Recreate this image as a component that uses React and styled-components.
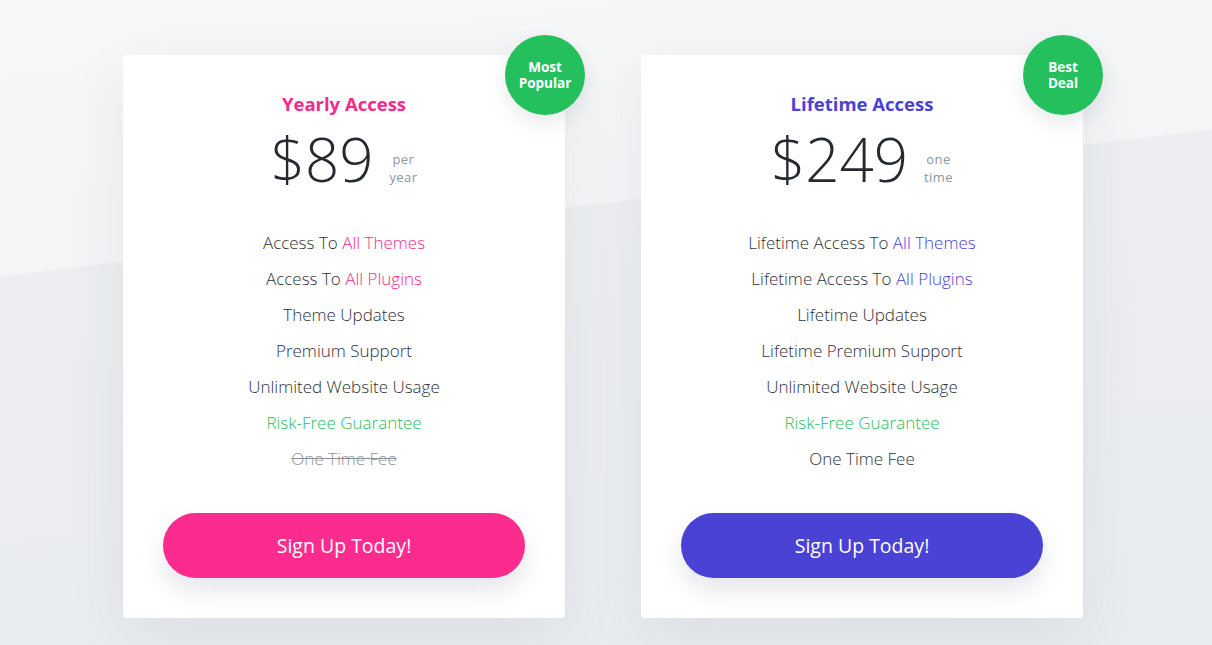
import React from 'react';
import styled, { createGlobalStyle } from 'styled-components';

const GlobalStyle = createGlobalStyle`
  html, body {
    margin: 0;
    padding: 0;
  }
  body {
    font-family: "Open Sans", "Liberation Sans", sans-serif;
    background: #f5f6f8;
  }
`;

const plans = [
  {
    title: 'Yearly Access',
    accent: '#f72a8c',
    button: '#fb2c8e',
    price: '$89',
    unit: ['per', 'year'],
    badge: ['Most', 'Popular'],
    features: [
      { text: 'Access To ', hi: 'All Themes' },
      { text: 'Access To ', hi: 'All Plugins' },
      { text: 'Theme Updates' },
      { text: 'Premium Support' },
      { text: 'Unlimited Website Usage' },
      { text: 'Risk-Free Guarantee', tone: 'green' },
      { text: 'One Time Fee', tone: 'struck' },
    ],
  },
  {
    title: 'Lifetime Access',
    accent: '#4a42d6',
    button: '#4a42d4',
    price: '$249',
    unit: ['one', 'time'],
    badge: ['Best', 'Deal'],
    features: [
      { text: 'Lifetime Access To ', hi: 'All Themes' },
      { text: 'Lifetime Access To ', hi: 'All Plugins' },
      { text: 'Lifetime Updates' },
      { text: 'Lifetime Premium Support' },
      { text: 'Unlimited Website Usage' },
      { text: 'Risk-Free Guarantee', tone: 'green' },
      { text: 'One Time Fee' },
    ],
  },
];

const App = () => (
  <>
    <GlobalStyle />
    <Page>
      <Cards>
        {plans.map((plan) => (
          <Card key={plan.title}>
            <Badge>
              {plan.badge[0]}
              <br />
              {plan.badge[1]}
            </Badge>
            <Title $accent={plan.accent}>{plan.title}</Title>
            <PriceRow>
              <Price>{plan.price}</Price>
              <Unit>
                <UnitLine>{plan.unit[0]}</UnitLine>
                <UnitLine>{plan.unit[1]}</UnitLine>
              </Unit>
            </PriceRow>
            <Features>
              {plan.features.map((f) => (
                <Feature key={f.text + (f.hi || '')} $tone={f.tone}>
                  {f.text}
                  {f.hi && <Highlight $accent={plan.accent}>{f.hi}</Highlight>}
                </Feature>
              ))}
            </Features>
            <SignUp $color={plan.button}>Sign Up Today!</SignUp>
          </Card>
        ))}
      </Cards>
    </Page>
  </>
);

export default App;

const Page = styled.div`
  min-height: 645px;
  box-sizing: border-box;
  padding: 55px 6px 27px 0;
  background: linear-gradient(173.08deg, #f6f7f8 0px, #f4f5f7 274px, #eceef1 275px, #e9ecef 100%);
`;

const Cards = styled.div`
  display: flex;
  justify-content: center;
  gap: 76px;
`;

const Card = styled.div`
  position: relative;
  width: 442px;
  box-sizing: border-box;
  padding: 38px 40px 40px;
  background: #ffffff;
  border-radius: 3px;
  box-shadow: 0 20px 60px rgba(40, 50, 70, 0.07);
  display: flex;
  flex-direction: column;
  align-items: center;
`;

const Badge = styled.div`
  position: absolute;
  top: -20px;
  right: -20px;
  width: 80px;
  height: 80px;
  border-radius: 50%;
  background: #25c05e;
  color: #ffffff;
  font-size: 13.5px;
  font-weight: 700;
  line-height: 16px;
  text-align: center;
  display: flex;
  align-items: center;
  justify-content: center;
  box-shadow: 0 8px 20px rgba(40, 50, 70, 0.1);
`;

const Title = styled.h3`
  margin: 0;
  font-size: 18.5px;
  line-height: 22px;
  font-weight: 700;
  color: ${({ $accent }) => $accent};
`;

const PriceRow = styled.div`
  margin-top: 11px;
  display: flex;
  align-items: center;
  gap: 16px;
`;

const Price = styled.span`
  font-size: 60px;
  line-height: 66px;
  font-weight: 300;
  color: #252a31;
`;

const Unit = styled.span`
  padding-top: 18px;
  display: flex;
  flex-direction: column;
  align-items: center;
  color: #8c96a2;
`;

const UnitLine = styled.span`
  font-size: 13px;
  line-height: 18px;
  letter-spacing: 0.4px;
  font-weight: 400;
`;

const Features = styled.ul`
  list-style: none;
  margin: 33px 0 0;
  padding: 0;
  text-align: center;
`;

const Feature = styled.li`
  font-size: 17px;
  line-height: 36px;
  font-weight: 300;
  color: ${({ $tone }) =>
    $tone === 'green' ? '#28c060' : $tone === 'struck' ? '#8a929c' : '#2f3237'};
  text-decoration: ${({ $tone }) => ($tone === 'struck' ? 'line-through' : 'none')};
`;

const Highlight = styled.span`
  color: ${({ $accent }) => $accent};
`;

const SignUp = styled.button`
  margin-top: 36px;
  width: 100%;
  height: 65px;
  border: none;
  border-radius: 33px;
  background: ${({ $color }) => $color};
  color: #ffffff;
  font-family: inherit;
  font-size: 19.5px;
  font-weight: 400;
  box-shadow: 0 12px 24px rgba(40, 50, 70, 0.12);
  cursor: pointer;
`;
